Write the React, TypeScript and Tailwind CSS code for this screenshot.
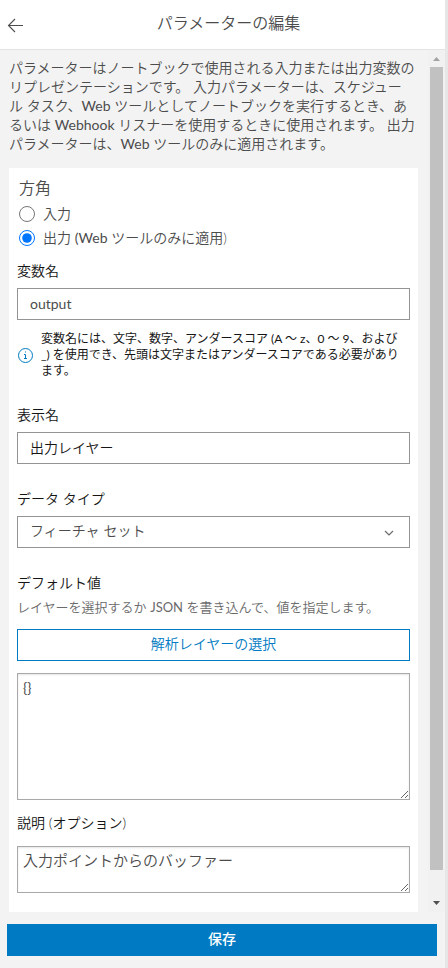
import { useState } from 'react'

const BackIcon = () => (
    <svg width="17" height="16" viewBox="0 0 17 16" fill="none" stroke="#4c4c4c" strokeWidth="1.1" aria-hidden="true">
        <path d="M16 8.5H1.5M8 2 1.5 8.5 8 15" />
    </svg>
)

const InfoIcon = () => (
    <svg width="16" height="16" viewBox="0 0 16 16" fill="none" stroke="#007ac2" aria-hidden="true" className="shrink-0">
        <circle cx="8.5" cy="8.5" r="7" />
        <path d="M7 7.5h1.5v4M7 11.5h3" />
        <path d="M8 5h1" strokeWidth="1.2" />
    </svg>
)

const ChevronIcon = () => (
    <svg width="10" height="10" viewBox="0 0 10 10" fill="none" stroke="#6a6a6a" strokeWidth="1.2" aria-hidden="true" className="pointer-events-none absolute right-4 top-3">
        <path d="M1 3l4 4 4-4" />
    </svg>
)

const labelStyle = 'block text-sm leading-5 text-[#151515]'
const boxStyle = 'block w-full h-8 px-3 pb-0.5 border border-[#949494] bg-white text-sm'
const areaStyle = 'block w-full px-[5px] border border-[#a9a9a9] bg-white shadow-[inset_0_1px_2px_#e5e5e5] resize'

const Scrollbar = () => (
    <div className="flex w-[17px] shrink-0 flex-col items-center bg-[#f1f1f1]" aria-hidden="true">
        <svg width="17" height="17" viewBox="0 0 17 17" fill="#a3a3a3">
            <path d="M5 11 8.5 7 12 11z" />
        </svg>
        <div className="w-[13px] flex-1 bg-[#c1c1c1]"></div>
        <svg width="17" height="42" viewBox="0 0 17 42" fill="#505050">
            <path d="M5 31h7L8.5 35z" />
        </svg>
    </div>
)

const App = () => {
    const [direction, setDirection] = useState('output')

    return (
        <div className="flex h-screen flex-col border-r-[3px] border-[#e6e6e6] bg-[#f3f3f3] font-['Lato','Noto_Sans_CJK_JP',sans-serif] font-[350] text-[#4c4c4c]">
            <header className="flex h-[50px] shrink-0 items-center border-b border-[#e3e3e3] bg-white pl-[7px] pr-2">
                <button type="button" aria-label="戻る"><BackIcon /></button>
                <h1 className="flex-1 pb-1 pr-1 text-center text-base font-[350]">パラメーターの編集</h1>
            </header>

            <div className="flex min-h-0 flex-1">
                <main className="min-w-0 flex-1 overflow-y-auto pl-[9px] pr-2.5 pt-2 [scrollbar-width:none]">
                    <p className="whitespace-nowrap text-sm leading-[19px]">
                        パラメーターはノートブックで使用される入力または出力変数の<br />
                        リプレゼンテーションです。 入力パラメーターは、スケジュー<br />
                        ル タスク、<span className="font-normal">Web</span> ツールとしてノートブックを実行するとき、あ<br />
                        るいは <span className="font-normal">Webhook</span> リスナーを使用するときに使用されます。 出力<br />
                        パラメーターは、<span className="font-normal">Web</span> ツールのみに適用されます。
                    </p>

                    <form id="parameter" className="mt-[15px] bg-white px-2 pb-8 pt-2">
                        <fieldset className="px-0.5 text-sm">
                            <legend className="mb-0.5 text-base leading-6">方角</legend>
                            <label className="flex h-6 items-center gap-2">
                                <input type="radio" name="direction" className="h-4 w-4" checked={direction === 'input'} onChange={() => setDirection('input')} />
                                入力
                            </label>
                            <label className="flex h-6 items-center gap-2">
                                <input type="radio" name="direction" className="h-4 w-4" checked={direction === 'output'} onChange={() => setDirection('output')} />
                                <span>出力 <span className="font-normal">(Web</span> ツールのみに適用)</span>
                            </label>
                        </fieldset>

                        <div className="mt-[11px]">
                            <label htmlFor="variable" className={`${labelStyle} mb-[7px]`}>変数名</label>
                            <input id="variable" type="text" defaultValue="output" className={`${boxStyle} font-normal`} />
                            <div className="mt-[11px] flex items-center gap-2">
                                <InfoIcon />
                                <p className="whitespace-nowrap text-xs font-normal leading-4 text-[#151515]">
                                    変数名には、文字、数字、アンダースコア (A ～ z、0 ～ 9、および<br />
                                    _) を使用でき、先頭は文字またはアンダースコアである必要があり<br />
                                    ます。
                                </p>
                            </div>
                        </div>

                        <div className="mt-[26px]">
                            <label htmlFor="display" className={`${labelStyle} mb-[7px]`}>表示名</label>
                            <input id="display" type="text" defaultValue="出力レイヤー" className={`${boxStyle} text-[#151515]`} />
                        </div>

                        <div className="mt-[25px]">
                            <label htmlFor="type" className={`${labelStyle} mb-[7px]`}>データ タイプ</label>
                            <div className="relative">
                                <select id="type" className={`${boxStyle} appearance-none`}>
                                    <option>フィーチャ セット</option>
                                </select>
                                <ChevronIcon />
                            </div>
                        </div>

                        <div className="mt-[25px]">
                            <label htmlFor="default" className={labelStyle}>デフォルト値</label>
                            <p className="mb-3 mt-1 text-[13px] leading-5 text-[#6a6a6a]">レイヤーを選択するか <span className="font-normal">JSON</span> を書き込んで、値を指定します。</p>
                            <button type="button" className="block h-8 w-full border border-[#007ac2] bg-white pb-0.5 text-sm text-[#007ac2]">解析レイヤーの選択</button>
                            <textarea id="default" defaultValue="{}" className={`${areaStyle} mt-3 h-[127px] pt-1 text-sm font-normal`} />
                        </div>

                        <div className="mt-[13px]">
                            <label htmlFor="description" className={`${labelStyle} mb-[13px]`}>説明 (オプション)</label>
                            <textarea id="description" defaultValue="入力ポイントからのバッファー" className={`${areaStyle} h-[47px] pt-[3px] text-[15px] leading-5`} />
                        </div>
                    </form>
                </main>
                <Scrollbar />
            </div>

            <footer className="shrink-0 py-3 pl-[7px] pr-2">
                <button type="submit" form="parameter" className="block h-8 w-full bg-[#007ac2] pb-0.5 text-sm font-medium text-white">保存</button>
            </footer>
        </div>
    )
}

export default App
